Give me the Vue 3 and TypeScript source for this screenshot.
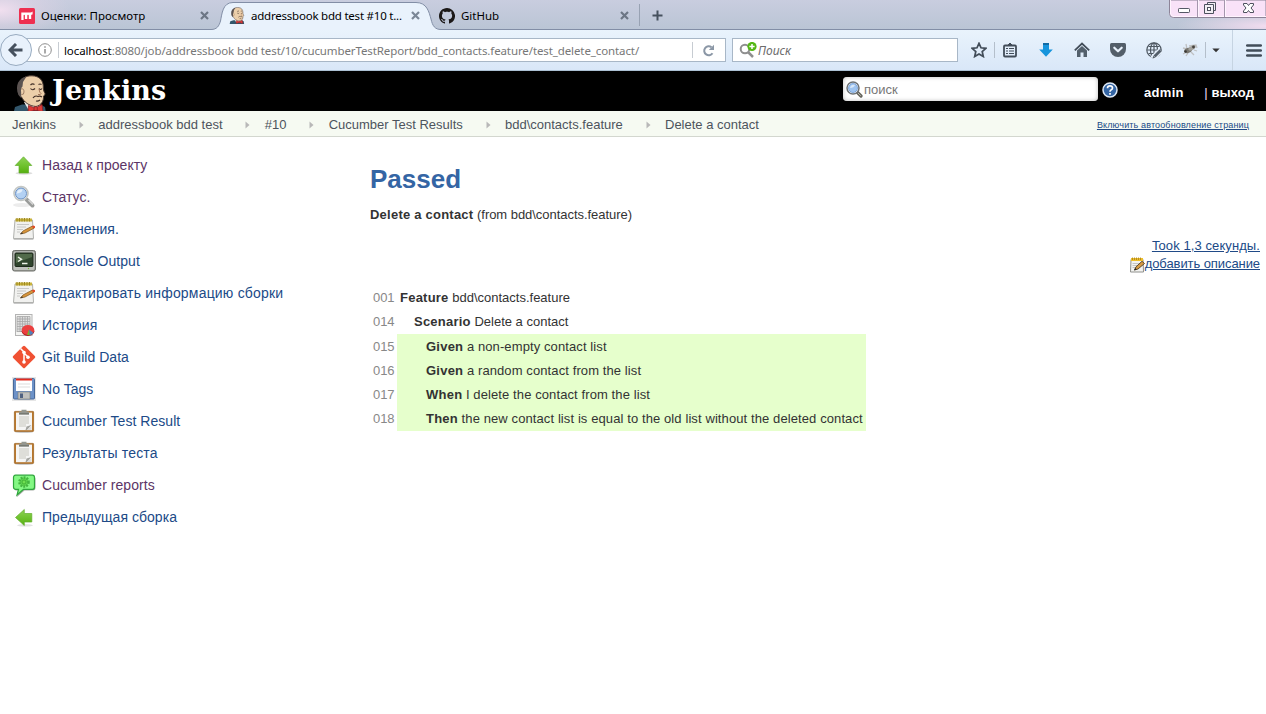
<script setup lang="ts">
interface Task { label: string; icon: string; visited?: boolean; wide?: boolean }
interface Step { line: string; keyword: string; text: string; level: number }

const tasks: Task[] = [
  { label: 'Назад к проекту', icon: 'up', visited: true },
  { label: 'Статус.', icon: 'search', visited: true },
  { label: 'Изменения.', icon: 'notepad' },
  { label: 'Console Output', icon: 'terminal' },
  { label: 'Редактировать информацию сборки', icon: 'notepad', wide: true },
  { label: 'История', icon: 'graph', wide: true },
  { label: 'Git Build Data', icon: 'git' },
  { label: 'No Tags', icon: 'save' },
  { label: 'Cucumber Test Result', icon: 'clipboard' },
  { label: 'Результаты теста', icon: 'clipboard', wide: true },
  { label: 'Cucumber reports', icon: 'report', visited: true },
  { label: 'Предыдущая сборка', icon: 'previous' },
]

const crumbs: string[] = [
  'Jenkins', 'addressbook bdd test', '#10', 'Cucumber Test Results', 'bdd\\contacts.feature', 'Delete a contact',
]

const steps: Step[] = [
  { line: '001', keyword: 'Feature', text: 'bdd\\contacts.feature', level: 0 },
  { line: '014', keyword: 'Scenario', text: 'Delete a contact', level: 1 },
  { line: '015', keyword: 'Given', text: 'a non-empty contact list', level: 2 },
  { line: '016', keyword: 'Given', text: 'a random contact from the list', level: 2 },
  { line: '017', keyword: 'When', text: 'I delete the contact from the list', level: 2 },
  { line: '018', keyword: 'Then', text: 'the new contact list is equal to the old list without the deleted contact', level: 2 },
]
</script>

<template>
  <div class="window">
    <header class="tabstrip">
      <svg class="active-shape" width="232" height="30" viewBox="0 0 232 30">
        <path d="M0 30V29.5H1C7 29.5 9 26 10.5 21C12 14 12.5 2.5 23 2.5H206C217 2.5 219 12 221 19C222.5 26 225 29.5 231 29.5V30Z" fill="#e9f2fc" />
        <path d="M0 29.5H1C7 29.5 9 26 10.5 21C12 14 12.5 2.5 23 2.5H206C217 2.5 219 12 221 19C222.5 26 225 29.5 231 29.5" fill="none" stroke="#828ea6" />
      </svg>
      <div class="tab tab-first">
        <svg width="16" height="16" viewBox="0 0 16 16"><rect width="16" height="16" rx="1.5" fill="#ee2f50" /><path d="M2.3 4.6H11.2Q12.6 4.6 13.6 3.6V6.2Q13 6.8 12.2 6.8V11H9.8V7.6Q9.8 6.8 9 6.8T8.300 7.600V11H5.900V7.600Q5.900 6.800 5.200 6.800T4.600 7.600V12H2.300Z" fill="#fff" /></svg>
        <span class="tab-label">Оценки: Просмотр</span>
        <svg class="close" width="9" height="9" viewBox="0 0 9 9"><path d="M1 1L8 8M8 1L1 8" stroke="#6c7685" stroke-width="2.2" /></svg>
      </div>
      <div class="tab tab-active">
        <svg width="16" height="17" viewBox="0 0 36 38"><use href="#butler" /></svg>
        <span class="tab-label">addressbook bdd test #10 t...</span>
        <svg class="close" width="9" height="9" viewBox="0 0 9 9"><path d="M1 1L8 8M8 1L1 8" stroke="#7b8796" stroke-width="2.2" /></svg>
      </div>
      <div class="tab tab-github">
        <svg width="16" height="16" viewBox="0 0 16 16"><path fill="#1b1817" d="M8 0C3.58 0 0 3.58 0 8c0 3.54 2.29 6.53 5.47 7.59.4.07.55-.17.55-.38 0-.19-.01-.82-.01-1.49-2.01.37-2.53-.49-2.69-.94-.09-.23-.48-.94-.82-1.13-.28-.15-.68-.52-.01-.53.63-.01 1.08.58 1.23.82.72 1.21 1.87.87 2.33.66.07-.52.28-.87.51-1.07-1.78-.2-3.64-.89-3.64-3.95 0-.87.31-1.59.82-2.15-.08-.2-.36-1.02.08-2.12 0 0 .67-.21 2.2.82.64-.18 1.32-.27 2-.27s1.36.09 2 .27c1.53-1.04 2.2-.82 2.2-.82.44 1.1.16 1.92.08 2.12.51.56.82 1.27.82 2.15 0 3.07-1.87 3.75-3.65 3.95.29.25.54.73.54 1.48 0 1.07-.01 1.93-.01 2.2 0 .21.15.46.55.38A8 8 0 0 0 8 0z" /></svg>
        <span class="tab-label">GitHub</span>
        <svg class="close" width="9" height="9" viewBox="0 0 9 9"><path d="M1 1L8 8M8 1L1 8" stroke="#6c7685" stroke-width="2.2" /></svg>
      </div>
      <div class="new-tab"><svg width="11" height="11" viewBox="0 0 11 11"><path d="M5.5 .5V10.5M.5 5.5H10.5" stroke="#46515e" stroke-width="2" /></svg></div>
      <div class="controls">
        <svg width="97" height="18" viewBox="0 0 97 18">
          <path d="M.5 0V13.5Q.5 17.5 4.5 17.5H97V0Z" fill="#f9e2f8" stroke="#8d8498" />
          <path d="M1.5 0V13Q1.5 16.5 5 16.5H97M29.5 0V16M56.5 0V16" fill="none" stroke="#fff4fe" />
          <path d="M28.5 0V17M55.5 0V17" stroke="#a596ad" />
          <rect x="9.5" y="8.5" width="11" height="4" rx=".8" fill="#fff" stroke="#555866" />
          <path d="M38.5 2.5H46.5V10.5H44.5V13.5H35.5V4.5H38.5Z" fill="#f2eef4" stroke="#4d505e" /><path d="M37.5 4.5H44.5V11" fill="none" stroke="#4d505e" /><rect x="38.5" y="7.5" width="3" height="3" fill="#fff" stroke="#4d505e" />
          <path d="M74.5 3.5H78L79.5 5.5L81 3.5H84.5V5L82 8L84.5 11V12.5H81L79.5 10.5L78 12.5H74.5V11L77 8L74.5 5Z" fill="#fff" stroke="#4d505e" />
        </svg>
      </div>
    </header>

    <nav class="toolbar">
      <div class="back"><svg width="16" height="14" viewBox="0 0 16 14"><path d="M8 1L2 7L8 13M2.5 7H14.5" fill="none" stroke="#46515e" stroke-width="3" /></svg></div>
      <div class="address">
        <svg class="info" width="14" height="14" viewBox="0 0 14 14"><circle cx="7" cy="7" r="6.3" fill="none" stroke="#8f8f8f" /><path d="M7 6V10.5M7 3.2V4.8" stroke="#8f8f8f" stroke-width="1.5" /></svg>
        <i class="rule"></i>
        <span class="url"><b>localhost</b>:8080/job/addressbook bdd test/10/cucumberTestReport/bdd_contacts.feature/test_delete_contact/</span>
        <i class="rule last"></i>
        <svg class="reload" width="13" height="13" viewBox="0 0 13 13"><path d="M10.5 9.2A4.5 4.5 0 1 1 9.5 3.2" fill="none" stroke="#8b97a6" stroke-width="2" /><path d="M12 .8V6H6.8Z" fill="#8b97a6" /></svg>
      </div>
      <div class="browser-search">
        <svg width="18" height="17" viewBox="0 0 18 17"><circle cx="6" cy="7" r="4.3" fill="none" stroke="#8f8f8f" stroke-width="2" /><path d="M9 10L14 15" stroke="#8f8f8f" stroke-width="2.5" /><circle cx="13" cy="4.5" r="4.6" fill="#54b814" /><path d="M13 1.9V7.1M10.4 4.5H15.6" stroke="#fff" stroke-width="1.5" /></svg>
        <em>Поиск</em>
      </div>
      <div class="tools">
        <svg width="16" height="16" viewBox="0 0 16 16"><path d="M8 1.3L10 5.8L14.9 6.3L11.2 9.5L12.3 14.5L8 11.9L3.7 14.5L4.8 9.5L1.1 6.3L6 5.8Z" fill="none" stroke="#424d59" stroke-width="1.7" /></svg>
        <i class="rule"></i>
        <div class="tool-icons">
          <svg width="16" height="16" viewBox="0 0 16 16"><path d="M5.5 3.5L8 1L10.5 3.5" fill="#424d59" stroke="#424d59" /><rect x="2" y="3.5" width="12" height="11" rx="1" fill="none" stroke="#424d59" stroke-width="1.8" /><path d="M4 6.5H6M7 6.5H12M4 9H6M7 9H12M4 11.5H6M7 11.5H12" stroke="#424d59" stroke-width="1.2" /></svg>
          <svg width="16" height="16" viewBox="0 0 16 16"><path d="M5 1H11V7.5H14.8L8 14.8L1.2 7.5H5Z" fill="#1694dc" /><path d="M5 1H11V3H5Z" fill="#126ba5" /></svg>
          <svg width="16" height="16" viewBox="0 0 16 16"><path d="M.8 8.3L8 1.6L15.2 8.3" fill="none" stroke="#424d59" stroke-width="1.8" /><path d="M3 8.5L8 4L13 8.5V15H9.5V10.5H6.5V15H3Z" fill="#53606c" /></svg>
          <svg width="16" height="16" viewBox="0 0 16 16"><path d="M0 2.5Q0 1 1.5 1H14.5Q16 1 16 2.5V7A8 8 0 0 1 0 7Z" fill="#535e69" /><path d="M4.3 5.7L8 9.3L11.7 5.7" fill="none" stroke="#e8f1fb" stroke-width="2.2" stroke-linecap="round" stroke-linejoin="round" /></svg>
          <svg width="16" height="17" viewBox="0 0 16 17"><g fill="none" stroke="#4e5862" stroke-width="1.2"><circle cx="8" cy="8" r="7.2" /><ellipse cx="8" cy="8" rx="3.5" ry="7" /><path d="M1 8H15M8 1V15M2.5 4.5H13.5M2.5 11.5H12" /></g><path d="M6.5 16.5L14.5 8.5" stroke="#e3edf9" stroke-width="5.5" /><path d="M8.5 14.5L14.5 8.5" stroke="#535e69" stroke-width="2.8" /><path d="M6.5 16.5L7.3 13.8L9.2 15.7Z" fill="#535e69" /></svg>
          <svg width="16" height="14" viewBox="0 0 16 14"><path d="M1 5L5 6L4 1M7 3L14 2L15 5M5 9L1 11M6 10L4 13M9 9L12 12M12 7L15 8" fill="none" stroke="#bfc1c3" stroke-width="1.3" /><ellipse cx="6" cy="7.5" rx="4" ry="2.5" transform="rotate(-20 6 7)" fill="#77756e" /><ellipse cx="10" cy="5" rx="4" ry="2" transform="rotate(-30 10 5)" fill="#a3a29d" /><circle cx="11.5" cy="4" r="1.4" fill="#45423d" /><circle cx="3.5" cy="8.5" r="1.3" fill="#383632" /></svg>
        </div>
        <i class="rule"></i>
        <svg class="caret" width="8" height="5" viewBox="0 0 8 5"><path d="M.3 .5H7.7L4 4.3Z" fill="#343434" /></svg>
      </div>
      <div class="menu"><svg width="16" height="13" viewBox="0 0 16 13"><path d="M1.2 1.5H14.8M1.2 6.5H14.8M1.2 11.5H14.8" stroke="#424d59" stroke-width="2.6" stroke-linecap="round" /></svg></div>
    </nav>

    <div class="page-header">
      <svg class="butler" width="36" height="36" viewBox="0 0 36 36">
        <g id="butler">
          <path d="M1.5 38L3 32L10 29.5H28L33 32L34 38Z" fill="#32566b" />
          <path d="M12 27L16 34H27L29 27Z" fill="#f0ece8" />
          <path d="M8 10C9 3 14 .7 20 .8C28 1 31 6 31.3 11C31.2 14 31.5 16 33 18.5C33 20.5 32 20.5 31.5 21C32 26 29 30.5 24 31.5C17 31 12 27 9.5 22C5 19 6 14 8 14Z" fill="#eccfaa" stroke="#4a3a33" />
          <path d="M14.5 1.5C7 3 2.5 10 6.5 20L9 23L9.5 17Q8 14 10.5 11.5L11 7Z" fill="#5b5351" />
          <path d="M9 14Q12 13 12 17Q12 20 9.5 19.5" fill="#eccfaa" stroke="#8c6b55" stroke-width=".8" />
          <path d="M18.5 10Q20.5 8 22.5 9.5M26.5 9.5Q28 8.5 29.5 9.5M18.5 13.5Q20.5 16 23 13.5M27 13.5Q28.5 15.5 30 13.5M21 23Q23 20 26 21.5Q28 20.5 30 22M24 26Q26 26.5 28 25" fill="none" stroke="#433129" stroke-width="1.2" />
          <path d="M27 14Q27.5 18 29 18.5Q29 20 26 19.5" fill="none" stroke="#a5785a" />
          <path d="M16.5 30.5L21.5 32.5Q23.5 31 25.5 32L30 29.5L31 37L25 35.5H22L16 37Z" fill="#dc3a36" stroke="#8a2024" stroke-width=".8" />
          <path d="M22 32.5V36M25.3 32.5V36" stroke="#8a2024" stroke-width=".8" />
        </g>
      </svg>
      <span class="brand">Jenkins</span>
      <div class="site-search">
        <svg width="17" height="17" viewBox="0 0 17 17"><path d="M11.5 11.5L15 15" stroke="#65645c" stroke-width="3.2" stroke-linecap="round" /><path d="M12 12L14.8 14.8" stroke="#b9b8ae" /><circle cx="7" cy="7" r="6" fill="#fff" stroke="#6d7276" stroke-width="1.5" /><circle cx="7" cy="7" r="4.5" fill="#9fc4f0" stroke="#6f9bd3" stroke-width=".8" /><path d="M4 7Q5 3 9 4Q8 7 4 7" fill="#d8e7f8" /></svg>
        <span>поиск</span>
      </div>
      <svg class="help" width="16" height="16" viewBox="0 0 16 16"><circle cx="8" cy="8" r="7" fill="#3465a4" stroke="#dce7f5" stroke-width="1.5" /><path d="M5.5 6.2Q5.5 3.9 8 3.9T10.5 6.1Q10.5 7.3 9 8.1Q8 8.6 8 9.8M8 11V12.7" fill="none" stroke="#fff" stroke-width="1.7" /></svg>
      <b class="user">admin</b>
      <span class="logout"><i>|</i> <b>выход</b></span>
    </div>

    <div class="breadcrumbs">
      <template v-for="(crumb, i) in crumbs" :key="crumb">
        <svg v-if="i" width="5" height="8" viewBox="0 0 5 8"><path d="M.5 .5L4.5 4L.5 7.5Z" fill="#b8b8b8" /></svg>
        <span>{{ crumb }}</span>
      </template>
      <u class="refresh">Включить автообновление страниц</u>
    </div>

    <main class="content">
      <aside class="sidebar">
        <div v-for="task in tasks" :key="task.label" class="task">
          <svg width="24" height="24" viewBox="0 0 24 24">
            <g v-if="task.icon === 'up'"><ellipse cx="12" cy="20.3" rx="8.5" ry="1.5" fill="#dcdcdc" /><path d="M11.5 3.8L19.8 12.5H16.5V20H7V12.5H3.2Z" fill="url(#leaf)" stroke="#62ad2c" stroke-width=".7" /></g>
            <g v-else-if="task.icon === 'search'"><ellipse cx="10" cy="20" rx="9" ry="2" fill="#ececec" /><path d="M14.5 14.5L20.5 20.5" stroke="#9a9c9a" stroke-width="4" stroke-linecap="round" /><path d="M16.5 15L21 19.5" stroke="#d8d9d7" stroke-width="1.3" /><circle cx="9" cy="8.5" r="7" fill="#eee" stroke="#c4c7c4" stroke-width="1.6" /><circle cx="9" cy="8.5" r="5.5" fill="#b3d1f3" stroke="#6e93c4" /><path d="M4.8 8.5Q5 4 10.5 4.2Q10.5 8 4.8 8.5" fill="#e4effa" /></g>
            <use v-else-if="task.icon === 'notepad'" href="#notepad" />
            <g v-else-if="task.icon === 'terminal'"><rect x=".5" y="1.5" width="23" height="20.5" rx="2" fill="#9b9d98" stroke="#6e706b" /><rect x="1.7" y="2.5" width="20.6" height="18.5" rx="1.5" fill="#c0c2bd" /><rect x="3" y="4" width="18" height="13.5" rx="1" fill="#30452d" stroke="#1e2a1c" /><path d="M4 5H20V8L4 14Z" fill="#516a4a" /><path d="M6 8L9.5 10.3L6 12.5M10 14.5H15.5" fill="none" stroke="#eef4e9" stroke-width="1.4" /><circle cx="16.5" cy="19.5" r=".7" fill="#73b934" /></g>
            <g v-else-if="task.icon === 'graph'"><rect x="3.5" y="1.5" width="16.5" height="21" fill="#f4f4f2" stroke="#b4b4b4" /><path d="M5 3.5H18V19H5Z" fill="#dedede" /><path d="M5 3.5H18M5 6H18M5 8.5H18M5 11H18M5 13.5H14M5 16H12M5 18.5H12M5 3.5V19M8 3.5V19M10.5 3.5V19M13 3.5V13M15.5 3.5V12M18 3.5V12" stroke="#a6a6a6" stroke-width=".8" /><ellipse cx="16" cy="18.3" rx="6.3" ry="4.7" fill="#a91515" /><ellipse cx="16" cy="17" rx="6.3" ry="4.9" fill="#ea4040" /><path d="M17 16.5L21.5 20Q20 22 17.5 22.2Z" fill="#4e83bd" /><path d="M17 16.5L17.5 22.2L15 22Z" fill="#70b831" /></g>
            <g v-else-if="task.icon === 'git'"><rect x="3.6" y="3.6" width="16.8" height="16.8" rx="1.5" transform="rotate(45 12 12)" fill="#f05133" /><path d="M8.5 3.5L12 7V17M12 8L16 12" stroke="#fff" stroke-width="1.5" fill="none" /><circle cx="12" cy="7.5" r="1.8" fill="#fff" /><circle cx="12" cy="17" r="1.8" fill="#fff" /><circle cx="16" cy="12.2" r="1.8" fill="#fff" /></g>
            <g v-else-if="task.icon === 'save'"><rect width="24" height="24" fill="#e6e6e6" /><rect x="1.5" y="1.5" width="21" height="20.5" rx="1" fill="#6d92c8" stroke="#48699a" /><rect x="4" y="1.5" width="16" height="12.5" fill="#fff" /><rect x="4" y="1.5" width="16" height="2" fill="#e22b1f" /><path d="M6 7H18M6 10H18" stroke="#ddd" /><rect x="6" y="15" width="12" height="7" fill="#bfc0be" stroke="#7b7c7a" stroke-width=".6" /><rect x="8" y="16.5" width="3" height="4.5" fill="#4f6181" /></g>
            <g v-else-if="task.icon === 'clipboard'"><ellipse cx="12" cy="23" rx="9" ry="1" fill="#ccc" /><rect x="2.4" y="2.4" width="19.2" height="20" rx=".6" fill="#b9772b" stroke="#a0682a" stroke-width=".8" /><rect x="4" y="3.6" width="16" height="17.6" fill="#f5f5f4" /><path d="M7 7H17V15H14V18H7Z" fill="#deded9" /><path d="M19.5 16L15 21H13.5L14.5 17.5Z" fill="#a4a5a1" /><path d="M19.5 17V21H15Z" fill="#dfdfdd" /><path d="M7 2.5H9.5V.7H14.5V2.5H17V5.5H7Z" fill="#949790" /><path d="M7 4.7H17" stroke="#777a73" stroke-width="1.5" /></g>
            <g v-else-if="task.icon === 'report'"><path d="M4 3.5H21Q23.5 3.5 23.5 6V14.5Q23.5 17.5 21 17.5H12.5L5 24L6 17.5H4Q2 17 2 14.5V6Q2 3.5 4 3.5Z" fill="#a4aba4" /><path d="M3.5 2.2H20.5Q22.5 2.2 22.5 4.5V14Q22.5 16.3 20.5 16.3H11.5L5 22L6.5 16.3H3.5Q1.5 16.3 1.5 14V4.5Q1.5 2.2 3.5 2.2Z" fill="#84f884" stroke="#2fa63c" stroke-width="1.2" /><circle cx="12" cy="9" r="4.5" fill="#5fd44f" stroke="#44b540" stroke-width="2.6" stroke-dasharray="1.8 1.1" /><circle cx="12" cy="9" r="2" fill="#6fdf51" stroke="#3aaa32" stroke-width=".8" /></g>
            <g v-else><ellipse cx="13" cy="20.3" rx="8" ry="1.2" fill="#e2e2e2" /><path d="M3.5 12.5L12.3 4.5V8.5H19.8V17H12.3V20.5Z" fill="url(#leaf)" stroke="#62ad2c" stroke-width=".7" /></g>
          </svg>
          <span :class="{ visited: task.visited, wide: task.wide }">{{ task.label }}</span>
        </div>
      </aside>
      <section class="report">
        <h1>Passed</h1>
        <p class="case"><b>Delete a contact</b> <span>(from bdd\contacts.feature)</span></p>
        <div class="meta">
          <u class="took">Took 1,3 секунды.</u>
          <div class="describe">
            <svg width="15" height="16" viewBox="0 0 15 16"><path d="M1 2.5H13L13.5 15H.5Z" fill="#f3f3f1" stroke="#8f908d" /><path d="M1 1H13V4H1Z" fill="#efc02c" /><path d="M2.5 .5V3M4.5 .5V3M6.5 .5V3M8.5 .5V3M10.5 .5V3" stroke="#a8801b" stroke-width=".8" /><path d="M2.5 6.5H10M2.5 8.5H8M2.5 10.5H6" stroke="#c6c6c4" /><path d="M4.5 13L6 9.8L12 4.3L14.5 6.5L8 12Z" fill="#d69a45" stroke="#54401e" stroke-width=".9" /><path d="M4 13.4L5.3 11L6.6 12.4Z" fill="#222" /></svg><u>добавить описание</u>
          </div>
        </div>
        <div class="steps">
          <div v-for="step in steps" :key="step.line" class="step">
            <span class="line">{{ step.line }}</span>
            <span class="sentence" :class="'level-' + step.level"><b>{{ step.keyword }}</b> <span>{{ step.text }}</span></span>
          </div>
        </div>
      </section>
    </main>

    <svg class="defs" width="0" height="0">
      <defs>
        <linearGradient id="leaf" x1="0" y1="0" x2="0" y2="1"><stop offset="0" stop-color="#8ed256" /><stop offset=".45" stop-color="#74c534" /><stop offset="1" stop-color="#56b010" /></linearGradient>
        <g id="notepad"><path d="M1 21.5H22L21 23H2Z" fill="#c9c9c9" /><path d="M3 3H20.5L21.5 21.5H1.5Z" fill="#f1f1ef" stroke="#b0b1ae" /><path d="M3.5 1.5H20V4.5H3.5Z" fill="#c9b33c" /><path d="M5 1V4.5M7.5 1V4.5M10 1V4.5M12.5 1V4.5M15 1V4.5M17.5 1V4.5" stroke="#9d8822" /><path d="M5 7.5H17M5 10H14M5 12.5H11M5 15H8" stroke="#c8c8c6" /><path d="M8.5 17L11 14L20.5 9L22.3 11L13 16Z" fill="#d8953b" stroke="#8a5f27" stroke-width=".8" /><path d="M19.8 9.3L21.5 8.5Q23.7 9 23 10.8L21.5 11.5Z" fill="#e04c29" /><path d="M8 17.3L10 15.2L11 16.4Z" fill="#333" /></g>
      </defs>
    </svg>
  </div>
</template>

<style>
html, body { margin: 0; overflow: hidden; background: #fff; }
</style>

<style scoped>
.window { width: 1266px; height: 714px; overflow: hidden; background: #fff; font: 13px/16px "Liberation Sans", Arial, sans-serif; color: #333; }
.window * { box-sizing: border-box; }
svg { display: block; flex: none; }
i { font-style: normal; }
.defs { position: absolute; }
.tabstrip { position: relative; height: 30px; display: flex; align-items: center; background: radial-gradient(ellipse 70px 30px at 0 10px, #f1dfef 0, #e3d5e680 50%, transparent), radial-gradient(ellipse 90px 14px at 1266px 26px, #f1dcef, transparent), linear-gradient(#c9cddf, #bac5d5); border-bottom: 1px solid #828ea6; font: 11.5px/16px "Noto Sans", "Open Sans", sans-serif; color: #000; }
.active-shape { position: absolute; left: 210px; top: 0; }
.tab { position: relative; display: flex; align-items: center; height: 30px; padding-top: 2px; }
.tab-label { flex: 1; margin-left: 6px; white-space: nowrap; }
.tab-first { width: 209px; margin-right: 1px; padding-left: 19px; }
.tab-active { width: 210px; padding-left: 19px; }
.tab-active .tab-label { letter-spacing: -0.22px; }
.tab-github { width: 219px; padding-left: 19px; }
.tab-github .close { margin-right: 10px; }
.new-tab { height: 22px; padding: 6px 0 0 12px; border-left: 1px solid #98a2b3; }
.controls { position: absolute; right: 0; top: 0; }
.toolbar { height: 41px; display: flex; align-items: center; background: linear-gradient(#e9f3fc, #d9e7f8); border-bottom: 1px solid #abc0d3; font: 12px/16px "Noto Sans", "Open Sans", sans-serif; }
.back { position: relative; z-index: 1; width: 32px; height: 32px; display: flex; align-items: center; justify-content: center; border: 1px solid #98abc0; border-radius: 50%; background: #e9f2fc; }
.address { width: 700px; height: 24px; margin-left: -6px; display: flex; align-items: center; border: 1px solid #a8b7c7; background: #fff; }
.info { margin-left: 11px; }
.rule { width: 1px; height: 16px; margin-left: 6px; background: #c7ccd2; }
.url { margin-left: 5px; padding-top: 2px; flex: 1; color: #777; white-space: nowrap; font-size: 11.5px; letter-spacing: -0.105px; }
.url b { font-weight: 400; color: #000; }
.rule.last { margin: 0 9px 0 0; }
.reload { margin-right: 10px; }
.browser-search { width: 226px; height: 24px; margin-left: 6px; padding-left: 6px; display: flex; align-items: center; border: 1px solid #a8b7c7; background: #fff; color: #6c6c6c; }
.browser-search em { margin-left: 1px; padding-top: 2px; }
.tools { display: flex; align-items: center; margin-left: 13px; width: 261px; }
.tools .rule { margin: 0 7px; background: #b4bfcb; }
.tool-icons { display: flex; align-items: center; gap: 20px; }
.tools .caret { margin-left: -1px; }
.menu { flex: 1; height: 40px; display: flex; align-items: center; padding-left: 13px; border-left: 1px solid #c6d4e2; }
.page-header { height: 40px; display: flex; align-items: center; background: #000; color: #fff; overflow: hidden; }
.butler { margin: 4px 0 0 12px; }
.brand { width: 791px; margin-left: 4px; font: bold 27px/32px "DejaVu Serif", serif; letter-spacing: .15px; }
.site-search { width: 255px; height: 24px; margin-top: -4px; padding-left: 3px; display: flex; align-items: center; background: #fff; border-radius: 4px; box-shadow: inset 0 0 4px #bbb; color: #777; }
.site-search span { margin: 2px 0 0 1px; }
.help { margin: -2px 0 0 4px; }
.user { margin: 3px 0 0 26px; letter-spacing: .3px; }
.logout { margin: 3px 0 0 20.500px; letter-spacing: .1px; }
.logout i { color: #f3d6f3; }
.breadcrumbs { height: 26px; display: flex; align-items: center; padding: 2px 0 0 12px; background: #f6faf2; border-bottom: 1px solid #d3d7cf; color: #4d545d; }
.breadcrumbs svg { margin: 0 14.5px 0 22.7px; }
.refresh { margin: 0 17px 0 auto; font-size: 9px; color: #204a87; letter-spacing: .14px; }
.content { display: flex; }
.sidebar { width: 370px; padding: 12px 0 0 12px; }
.task { height: 32px; display: flex; align-items: center; gap: 6px; font-size: 14px; color: #204a87; letter-spacing: .04px; }
.visited { color: #5c3566; }
.wide { letter-spacing: .19px; }
.report { flex: 1; padding-right: 6px; }
h1 { margin: 26px 0 0; font: bold 26px/32px "Liberation Sans", Arial, sans-serif; color: #3465a4; }
.case { margin: 12px 0 0; }
.case b, .sentence b { letter-spacing: .23px; }
.case span { letter-spacing: -.04px; }
.meta { margin-top: 14px; display: flex; flex-direction: column; align-items: flex-end; line-height: 18px; color: #204a87; }
.took { letter-spacing: .09px; }
.describe { display: flex; align-items: center; letter-spacing: -.08px; }
.describe svg { margin-top: 2px; }
.steps { width: max-content; margin-top: 13.15px; }
.step { display: flex; height: 24.2px; line-height: 24px; }
.line { width: 27px; padding-left: 3px; color: #888; letter-spacing: -.1px; }
.sentence { flex: 1; padding: 0 3px; white-space: nowrap; }
.sentence.level-1 { padding-left: 17px; }
.sentence.level-2 { padding-left: 29px; background: #e6ffcc; box-shadow: 0 -1px #e6ffcc; }
.level-2 span { letter-spacing: .1px; }
</style>
